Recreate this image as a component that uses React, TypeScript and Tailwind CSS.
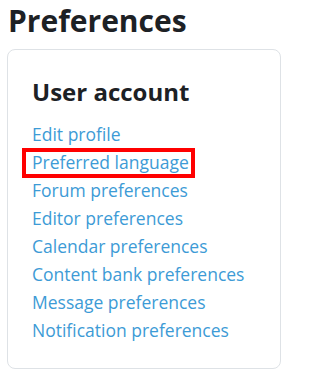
const links = [
  'Edit profile',
  'Preferred language',
  'Forum preferences',
  'Editor preferences',
  'Calendar preferences',
  'Content bank preferences',
  'Message preferences',
  'Notification preferences',
];

export default function App() {
  return (
    <div className="min-h-[375px] w-[286px] bg-white pl-[7px] pr-[5px] pt-[3px] font-['Open_Sans',sans-serif] text-[#1d2125]">
      <h2 className="pl-px text-[30px] font-bold leading-[36px]">Preferences</h2>
      <div className="mt-[10px] rounded-lg border border-[#dee2e6] px-6 pt-[27px] pb-[24px]">
        <h3 className="text-[24px] font-bold leading-[30px]">User account</h3>
        <ul className="mt-[13px]">
          {links.map((label) => (
            <li key={label} className="text-[17.5px] leading-[28px]">
              {label === 'Preferred language' ? (
                <span className="relative inline-block">
                  <a href="#" className="text-[#3d9bd6]">{label}</a>
                  <span className="pointer-events-none absolute -left-[10px] -right-[6px] top-0 -bottom-[2px] border-4 border-[#ff0000]" />
                </span>
              ) : (
                <a href="#" className="text-[#3d9bd6]">{label}</a>
              )}
            </li>
          ))}
        </ul>
      </div>
    </div>
  );
}
